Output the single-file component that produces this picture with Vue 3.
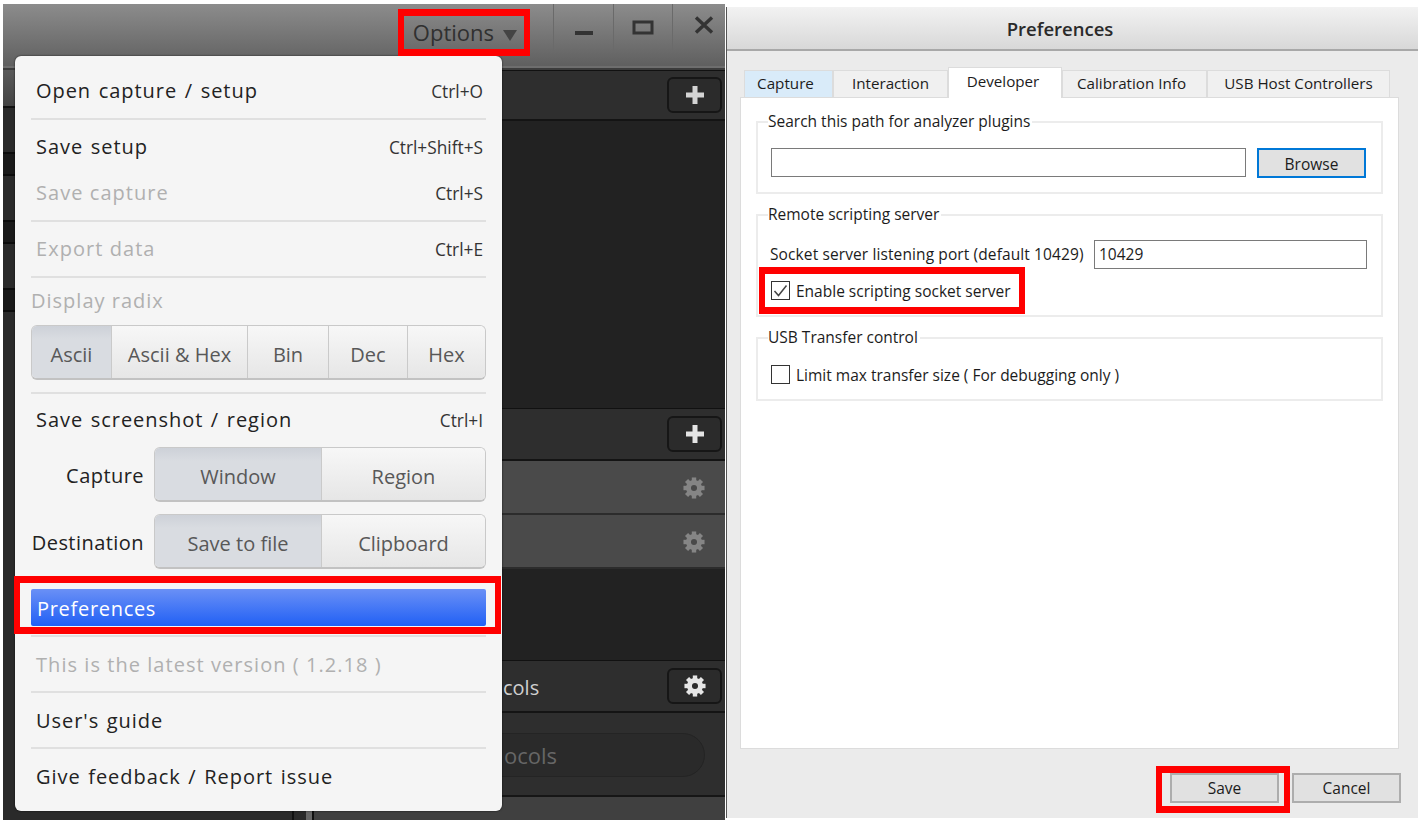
<script setup>
const radix = [
  { label: 'Ascii', active: true },
  { label: 'Ascii & Hex' },
  { label: 'Bin' },
  { label: 'Dec' },
  { label: 'Hex' },
]
const tabs = [
  { label: 'Capture', cls: 'tab-capture' },
  { label: 'Interaction', cls: 'tab-interaction' },
  { label: 'Developer', cls: 'tab-developer' },
  { label: 'Calibration Info', cls: 'tab-calibration' },
  { label: 'USB Host Controllers', cls: 'tab-usb' },
]
const teeth = [0, 45, 90, 135, 180, 225, 270, 315]
</script>

<template>
  <div class="page">
    <svg class="defs" width="0" height="0">
      <symbol id="gear" viewBox="0 0 24 24">
        <circle cx="12" cy="12" r="6" fill="none" stroke="currentColor" stroke-width="5.4" />
        <rect
          v-for="t in teeth"
          :key="t"
          x="9.6"
          y="0.5"
          width="4.8"
          height="6"
          fill="currentColor"
          :transform="`rotate(${t} 12 12)`"
        />
      </symbol>
    </svg>

    <section class="logic">
      <header class="titlebar">
        <div class="options">
          <span>Options</span>
          <i class="caret"></i>
        </div>
        <div class="winbtn btn-min">
          <svg width="20" height="6" viewBox="0 0 20 6"><rect x="1" y="1" width="18" height="4" fill="#333" /></svg>
        </div>
        <div class="winbtn btn-max">
          <svg width="22" height="15" viewBox="0 0 22 15"><rect x="2" y="2" width="18" height="11" fill="none" stroke="#333" stroke-width="3" /></svg>
        </div>
        <div class="winbtn btn-close">
          <svg width="20" height="18" viewBox="0 0 20 18"><path d="M2 1.5 18 16.5M18 1.5 2 16.5" stroke="#333" stroke-width="3.4" fill="none" /></svg>
        </div>
      </header>

      <div class="workspace">
        <div class="tracks">
          <div class="track-list">
            <div class="track-head"></div>
            <template v-for="n in 4" :key="n">
              <div class="track"></div>
              <div v-if="n < 4" class="band"></div>
            </template>
          </div>
          <div class="gutter"></div>
          <div class="scroll"></div>
        </div>
        <div class="sidebar">
          <div class="side-head h1">
            <button class="side-btn">
              <svg width="22" height="22" viewBox="0 0 22 22"><path d="M11 2v18M2 11h18" stroke="#d4d4d4" stroke-width="5" /></svg>
            </button>
          </div>
          <div class="side-empty first"></div>
          <div class="side-head">
            <button class="side-btn">
              <svg width="22" height="22" viewBox="0 0 22 22"><path d="M11 2v18M2 11h18" stroke="#e4e4e4" stroke-width="5" /></svg>
            </button>
          </div>
          <div class="side-row"><svg class="gear dim"><use href="#gear" /></svg></div>
          <div class="side-row"><svg class="gear dim"><use href="#gear" /></svg></div>
          <div class="side-empty second"></div>
          <div class="side-head third">
            <span class="side-title">cols</span>
            <button class="side-btn">
              <svg class="gear"><use href="#gear" /></svg>
            </button>
          </div>
          <div class="search-zone">
            <div class="search-pill">ocols</div>
          </div>
          <div class="side-foot"></div>
        </div>
      </div>

      <nav class="menu">
        <i class="notch"></i>
        <div class="item"><span>Open capture / setup</span><kbd>Ctrl+O</kbd></div>
        <hr />
        <div class="item"><span>Save setup</span><kbd>Ctrl+Shift+S</kbd></div>
        <div class="item off"><span>Save capture</span><kbd>Ctrl+S</kbd></div>
        <hr />
        <div class="item off"><span>Export data</span><kbd>Ctrl+E</kbd></div>
        <hr />
        <div class="radix-title">Display radix</div>
        <div class="seg seg-radix">
          <div v-for="r in radix" :key="r.label" class="seg-cell" :class="{ on: r.active }">{{ r.label }}</div>
        </div>
        <hr class="after-radix" />
        <div class="item shot"><span>Save screenshot / region</span><kbd>Ctrl+I</kbd></div>
        <div class="field">
          <label>Capture</label>
          <div class="seg seg-two">
            <div class="seg-cell on">Window</div>
            <div class="seg-cell">Region</div>
          </div>
        </div>
        <div class="field dest">
          <label>Destination</label>
          <div class="seg seg-two">
            <div class="seg-cell on">Save to file</div>
            <div class="seg-cell">Clipboard</div>
          </div>
        </div>
        <div class="selected">Preferences</div>
        <hr class="after-selected" />
        <div class="item off low"><span>This is the latest version ( 1.2.18 )</span></div>
        <hr />
        <div class="item low"><span>User's guide</span></div>
        <hr />
        <div class="item low"><span>Give feedback / Report issue</span></div>
      </nav>
    </section>

    <section class="dialog">
      <header class="dialog-title">Preferences</header>
      <div class="dialog-body">
        <div class="tabs">
          <div v-for="t in tabs" :key="t.label" class="tab" :class="t.cls">{{ t.label }}</div>
        </div>
        <div class="pane">
          <fieldset class="group g1">
            <legend>Search this path for analyzer plugins</legend>
            <div class="path-row">
              <div class="input path"></div>
              <button class="browse">Browse</button>
            </div>
          </fieldset>
          <fieldset class="group g2">
            <legend>Remote scripting server</legend>
            <div class="port-row">
              <span>Socket server listening port (default 10429)</span>
              <div class="input port">10429</div>
            </div>
            <div class="check">
              <span class="box">
                <svg width="15" height="15" viewBox="0 0 15 15"><path d="M1.5 8 5.5 12.5 13.5 2.5" fill="none" stroke="#444" stroke-width="1.5" /></svg>
              </span>
              Enable scripting socket server
            </div>
          </fieldset>
          <fieldset class="group g3">
            <legend>USB Transfer control</legend>
            <div class="check"><span class="box"></span>Limit max transfer size ( For debugging only )</div>
          </fieldset>
        </div>
        <div class="actions">
          <button class="action">Save</button>
          <button class="action">Cancel</button>
        </div>
      </div>
    </section>

    <div class="mark mark-options"></div>
    <div class="mark mark-prefs"></div>
    <div class="mark mark-check"></div>
    <div class="mark mark-save"></div>
  </div>
</template>

<style>
html,
body {
  margin: 0;
  background: #fff;
}
</style>

<style scoped>
.page {
  position: relative;
  width: 1420px;
  height: 824px;
  overflow: hidden;
  display: flex;
  align-items: flex-start;
  padding-left: 3px;
  box-sizing: border-box;
  background: #fff;
  font-family: "Open Sans", "Liberation Sans", sans-serif;
}
.defs {
  position: absolute;
}

/* left: analyzer window */
.logic {
  position: relative;
  width: 722px;
  height: 816px;
  margin-top: 4px;
  margin-right: 1px;
  flex: none;
  display: flex;
  flex-direction: column;
  background: #222;
}
.titlebar {
  height: 64px;
  flex: none;
  display: flex;
  justify-content: flex-end;
  background: linear-gradient(#8c8c8c, #5e5e5e);
  border-bottom: 2px solid #3c3c3c;
  box-shadow: inset 0 -2px 0 #6e6e6e;
}
.options {
  display: flex;
  align-items: center;
  gap: 9px;
  height: 56px;
  padding-right: 36px;
  font-size: 22px;
  color: #303030;
}
.caret {
  width: 0;
  height: 0;
  margin-top: 6px;
  border-left: 7px solid transparent;
  border-right: 7px solid transparent;
  border-top: 11px solid #444;
}
.winbtn {
  height: 48px;
  flex: none;
  display: flex;
  align-items: center;
  justify-content: center;
  box-sizing: border-box;
  border-left: 1px solid #6a6a6a;
}
.btn-min {
  width: 60px;
}
.btn-min svg {
  margin-top: 10px;
}
.btn-max {
  width: 59px;
}
.btn-max svg {
  margin-top: -2px;
}
.btn-close {
  width: 53px;
  padding-left: 10px;
}
.btn-close svg {
  margin-top: -6px;
}
.workspace {
  flex: 1;
  display: flex;
  min-height: 0;
}
.tracks {
  width: 311px;
  flex: none;
  display: flex;
  background: #2a2a2a;
  border-right: 2px solid #111;
  box-sizing: border-box;
}
.track-list {
  width: 289px;
  flex: none;
  box-sizing: content-box;
  border-right: 2px solid #111;
}
.track-head {
  height: 36px;
  background: linear-gradient(#5a5a5a, #444);
  border-bottom: 2px solid #111;
}
.track {
  height: 44px;
  background: #2a2a2a;
}
.band {
  height: 20px;
  background: #1a1a1a;
  border-top: 2px solid #0c0c0c;
  border-bottom: 2px solid #0c0c0c;
}
.gutter {
  width: 12px;
  flex: none;
}
.scroll {
  width: 6px;
  flex: none;
  background: #666;
}
.sidebar {
  flex: 1;
  display: flex;
  flex-direction: column;
  min-width: 0;
}
.side-head {
  height: 53px;
  flex: none;
  box-sizing: border-box;
  display: flex;
  align-items: center;
  justify-content: flex-end;
  padding-right: 3px;
  background: #2e2e2e;
  border-top: 1px solid #111;
  border-bottom: 2px solid #141414;
}
.side-head.h1 {
  height: 51px;
}
.side-head.third {
  justify-content: space-between;
  padding-left: 189px;
}
.side-title {
  font-size: 20px;
  color: #cfcfcf;
  margin-top: 3px;
}
.side-btn {
  width: 55px;
  height: 36px;
  padding: 0;
  display: flex;
  align-items: center;
  justify-content: center;
  background: #2b2b2b;
  border: 2px solid #161616;
  border-radius: 6px;
  color: #dcdcdc;
}
.side-empty {
  background: #222;
  flex: none;
}
.side-empty.first {
  height: 287px;
}
.side-empty.second {
  height: 91px;
}
.side-row {
  height: 54px;
  flex: none;
  box-sizing: border-box;
  display: flex;
  align-items: center;
  justify-content: flex-end;
  padding: 2px 20px 0 0;
  background: #4a4a4a;
  border-bottom: 2px solid #2c2c2c;
}
.gear {
  width: 22px;
  height: 22px;
  color: #e6e6e6;
}
.gear.dim {
  color: #858585;
}
.search-zone {
  height: 84px;
  flex: none;
  box-sizing: border-box;
  padding: 20px 20px 0 0;
  background: #2e2e2e;
  border-bottom: 2px solid #161616;
}
.search-pill {
  height: 44px;
  box-sizing: border-box;
  padding-left: 189px;
  line-height: 42px;
  font-size: 22px;
  color: #666;
  background: #2a2a2a;
  border: 1px solid #242424;
  border-radius: 0 22px 22px 0;
}
.side-foot {
  flex: 1;
  background: #404040;
}

/* options menu */
.menu {
  position: absolute;
  left: 12px;
  top: 52px;
  width: 487px;
  height: 755px;
  box-sizing: border-box;
  padding: 12px 16px 0;
  background: #f5f5f5;
  border-radius: 6px;
  box-shadow: 0 0 2px rgba(0, 0, 0, 0.8);
  color: #222;
}
.notch {
  position: absolute;
  left: 450px;
  top: -7px;
  margin-left: -5px;
  width: 0;
  height: 0;
  border-left: 5px solid transparent;
  border-right: 5px solid transparent;
  border-bottom: 7px solid #f5f5f5;
}
.menu hr {
  height: 2px;
  margin: 4px 0;
  border: 0;
  background: #e0e0e0;
}
.menu hr.after-radix {
  margin: 12px 0 3px;
}
.menu hr.after-selected {
  margin: 9px 0 4px;
}
.item {
  height: 46px;
  box-sizing: border-box;
  display: flex;
  align-items: center;
  justify-content: space-between;
  padding: 0 3px 2px 5px;
  font-size: 20px;
  letter-spacing: 0.95px;
  word-spacing: 1.5px;
}
.item.low {
  padding-bottom: 0;
}
.item.off {
  letter-spacing: 1.05px;
  word-spacing: 0;
  color: #b0b0b0;
}
.item.shot {
  margin-bottom: 4px;
}
.item kbd {
  margin-top: 2px;
  font-family: inherit;
  font-size: 17.3px;
  letter-spacing: 0;
  word-spacing: 0;
  color: #333;
}
.radix-title {
  height: 38px;
  line-height: 38px;
  margin-bottom: 5px;
  font-size: 20px;
  letter-spacing: 1px;
  color: #b0b0b0;
}
.seg {
  display: grid;
  height: 55px;
  box-sizing: border-box;
  border: 1px solid #c9c9c9;
  border-bottom: 2px solid #c2c2c2;
  border-radius: 6px;
  overflow: hidden;
}
.seg-radix {
  grid-template-columns: 79px 136px 81px 79px 1fr;
}
.seg-two {
  grid-template-columns: 166px 1fr;
  width: 332px;
  flex: none;
}
.seg-cell {
  display: flex;
  align-items: center;
  justify-content: center;
  padding-top: 5px;
  font-size: 20px;
  color: #585858;
  background: linear-gradient(#f7f7f7, #e6e6e6);
  border-left: 1px solid #cacaca;
}
.seg-cell:first-child {
  border-left: 0;
}
.seg-cell.on {
  background: linear-gradient(#cdd1d8, #d9dce1 25%);
}
.field {
  display: flex;
  align-items: center;
  justify-content: space-between;
  height: 55px;
}
.field.dest {
  margin-top: 12px;
}
.field label {
  width: 113px;
  text-align: right;
  font-size: 20px;
  letter-spacing: 0.45px;
  white-space: nowrap;
  padding-top: 1px;
}
.selected {
  height: 37px;
  margin-top: 20px;
  padding-left: 6px;
  line-height: 39px;
  font-size: 20px;
  letter-spacing: 0.7px;
  color: #fff;
  border-radius: 2px;
  background: linear-gradient(#6a90f6, #2160f5);
}

/* right: preferences dialog */
.dialog {
  width: 692px;
  height: 811px;
  margin-top: 7px;
  flex: none;
  display: flex;
  flex-direction: column;
  box-sizing: border-box;
  border-left: 1px solid #555;
  background: #ebebeb;
  color: #1c1c1c;
}
.dialog-title {
  height: 44px;
  flex: none;
  box-sizing: border-box;
  padding-right: 25px;
  text-align: center;
  line-height: 44px;
  font-size: 18.5px;
  font-weight: 600;
  color: #2a2a2a;
  background: linear-gradient(#f2f2f2, #d8d8d8);
  border-bottom: 2px solid #a8a8a8;
}
.dialog-body {
  flex: 1;
  display: flex;
  flex-direction: column;
  padding: 16px 19px 0 13px;
  font-size: 15.5px;
}
.tabs {
  display: flex;
  align-items: flex-end;
  height: 30px;
  padding-left: 4px;
  position: relative;
  z-index: 1;
}
.tab {
  height: 27px;
  display: flex;
  align-items: center;
  justify-content: center;
  box-sizing: border-box;
  padding-bottom: 2px;
  font-size: 15.2px;
  background: #f0f0f0;
  border: 1px solid #dcdcdc;
  border-bottom: 0;
  flex: none;
}
.tab-capture {
  width: 89px;
  padding-right: 6px;
  background: #d9ebf9;
}
.tab-interaction {
  width: 115px;
}
.tab-developer {
  width: 114px;
  height: 31px;
  background: #fff;
  padding: 0 4px 4px 0;
  margin-bottom: -1px;
  border-bottom: 0;
}
.tab-calibration {
  width: 145px;
  padding-right: 6px;
}
.tab-usb {
  width: 183px;
}
.pane {
  height: 652px;
  flex: none;
  box-sizing: border-box;
  padding: 16px 15px 0 15px;
  background: #fff;
  border: 1px solid #dcdcdc;
}
.group {
  margin: 0 0 13px;
  padding: 0;
  min-width: 0;
  box-sizing: border-box;
  border: 2px solid #ececec;
}
.group legend {
  margin-left: 10px;
  padding: 0 2px 0 0;
  line-height: 1;
  font-size: 15.5px;
}
.g1 {
  height: 80px;
}
.g2 {
  height: 110px;
}
.g3 {
  height: 71px;
}
.path-row {
  display: flex;
  align-items: flex-start;
  gap: 11px;
  padding: 18px 0 0 13px;
}
.input {
  height: 29px;
  box-sizing: border-box;
  border: 1px solid #7a7a7a;
  background: #fff;
  line-height: 27px;
  padding-left: 4px;
}
.path {
  width: 475px;
}
.browse {
  width: 109px;
  height: 30px;
  padding: 0 0 0 0;
  font: inherit;
  line-height: 29px;
  color: inherit;
  background: #e1e1e1;
  border: 2px solid #0078d7;
}
.port-row {
  display: flex;
  align-items: center;
  justify-content: space-between;
  padding: 17px 14px 0 12px;
}
.port-row span {
  letter-spacing: 0.11px;
}
.port {
  width: 273px;
}
.check {
  display: flex;
  align-items: center;
  gap: 6px;
  height: 20px;
  margin: 12px 0 0 13px;
  white-space: nowrap;
}
.g3 .check {
  margin-top: 19px;
}
.box {
  width: 19px;
  height: 19px;
  flex: none;
  box-sizing: border-box;
  display: flex;
  align-items: center;
  justify-content: center;
  background: #fff;
  border: 1px solid #333;
}
.actions {
  display: flex;
  justify-content: flex-end;
  gap: 13px;
  padding-top: 24px;
  margin-right: -2px;
}
.action {
  width: 109px;
  height: 30px;
  padding: 0;
  font: inherit;
  color: inherit;
  background: #e1e1e1;
  border: 2px solid #adadad;
}

/* red annotation boxes over the screenshots */
.mark {
  position: absolute;
  box-sizing: border-box;
  border: 7px solid #f00;
  border-left-width: 6px;
  border-right-width: 6px;
}
.mark-options {
  left: 398px;
  top: 9px;
  width: 132px;
  height: 47px;
}
.mark-prefs {
  left: 14px;
  top: 576px;
  width: 487px;
  height: 58px;
}
.mark-check {
  left: 759px;
  top: 267px;
  width: 266px;
  height: 47px;
}
.mark-save {
  left: 1156px;
  top: 766px;
  width: 134px;
  height: 47px;
}
</style>
